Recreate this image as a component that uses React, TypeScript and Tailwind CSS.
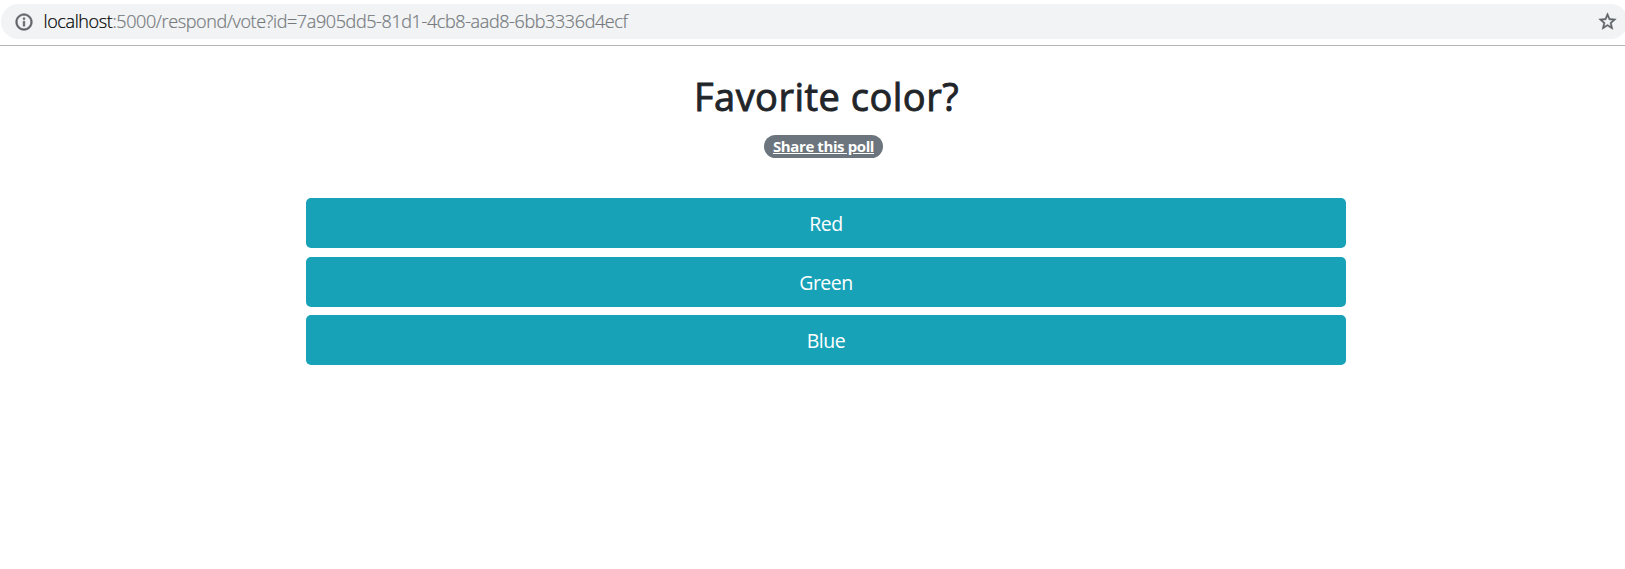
import React from "react";

const options = [
  { label: "Red", spacing: "mb-[9px]" },
  { label: "Green", spacing: "mb-2" },
  { label: "Blue", spacing: "" },
];

function AddressBar() {
  return (
    <header className="h-[46px] border-b border-[#b4b5b6] bg-white pt-1 pl-px">
      <div className="flex h-[35px] w-[1627px] items-center rounded-full bg-[#f1f3f4] pl-[12.5px]">
        <svg className="size-5 shrink-0 text-[#5f6368]" viewBox="0 0 24 24" fill="currentColor" stroke="currentColor" strokeWidth="0.6" aria-hidden="true">
          <path d="M11 7h2v2h-2zm0 4h2v6h-2zm1-9C6.48 2 2 6.48 2 12s4.48 10 10 10 10-4.480 10-10S17.52 2 12 2zm0 18c-4.410 0-8-3.590-8-8s3.590-8 8-8 8 3.590 8 8-3.590 8-8 8z" />
        </svg>
        <span className="ml-[10px] flex-1 whitespace-nowrap pb-0.5 font-['Open_Sans','Noto_Sans',sans-serif] text-[18px] leading-[24px] font-light tracking-[-0.385px] text-[#75797d] [-webkit-text-stroke:0.2px]">
          <span className="text-black">localhost</span>:5000/respond/vote?id=7a905dd5-81d1-4cb8-aad8-6bb3336d4ecf
        </span>
        <svg className="mr-[10px] size-[21px] shrink-0 text-[#5f6368]" viewBox="0 0 24 24" fill="currentColor" stroke="currentColor" strokeWidth="0.5" aria-hidden="true">
          <path d="M22 9.240l-7.190-.62L12 2 9.190 8.630 2 9.240l5.460 4.730L5.820 21 12 17.270 18.180 21l-1.630-7.030L22 9.240zM12 15.400l-3.760 2.270 1-4.280-3.320-2.880 4.380-.38L12 6.100l1.710 4.040 4.380.38-3.320 2.880 1 4.280L12 15.400z" />
        </svg>
      </div>
    </header>
  );
}

export default function App() {
  return (
    <div className="h-[569px] overflow-hidden bg-white font-['Open_Sans','Noto_Sans',sans-serif]">
      <AddressBar />
      <main className="ml-[306px] flex w-[1040px] flex-col items-center pt-[26px]">
        <h1 className="h-12 whitespace-nowrap pl-px text-[38px] leading-[48px] font-medium tracking-[0.480px] text-[#212529] [-webkit-text-stroke:0.9px]">Favorite color?</h1>
        <a href="#share" className="mt-[15px] mr-[5px] flex h-[23px] w-[119px] items-center justify-center rounded-full bg-[#6c757d] text-[15px] leading-[15px] font-bold tracking-[-0.4px] whitespace-nowrap text-white underline">
          Share this poll
        </a>
        <div className="mt-10 flex w-full flex-col">
          {options.map(({ label, spacing }) => (
            <button key={label} className={`h-[50px] w-full rounded-[5px] bg-[#17a2b8] pt-[2px] text-[19.5px] leading-[30px] tracking-[-0.480px] text-white ${spacing}`}>
              {label}
            </button>
          ))}
        </div>
      </main>
    </div>
  );
}
